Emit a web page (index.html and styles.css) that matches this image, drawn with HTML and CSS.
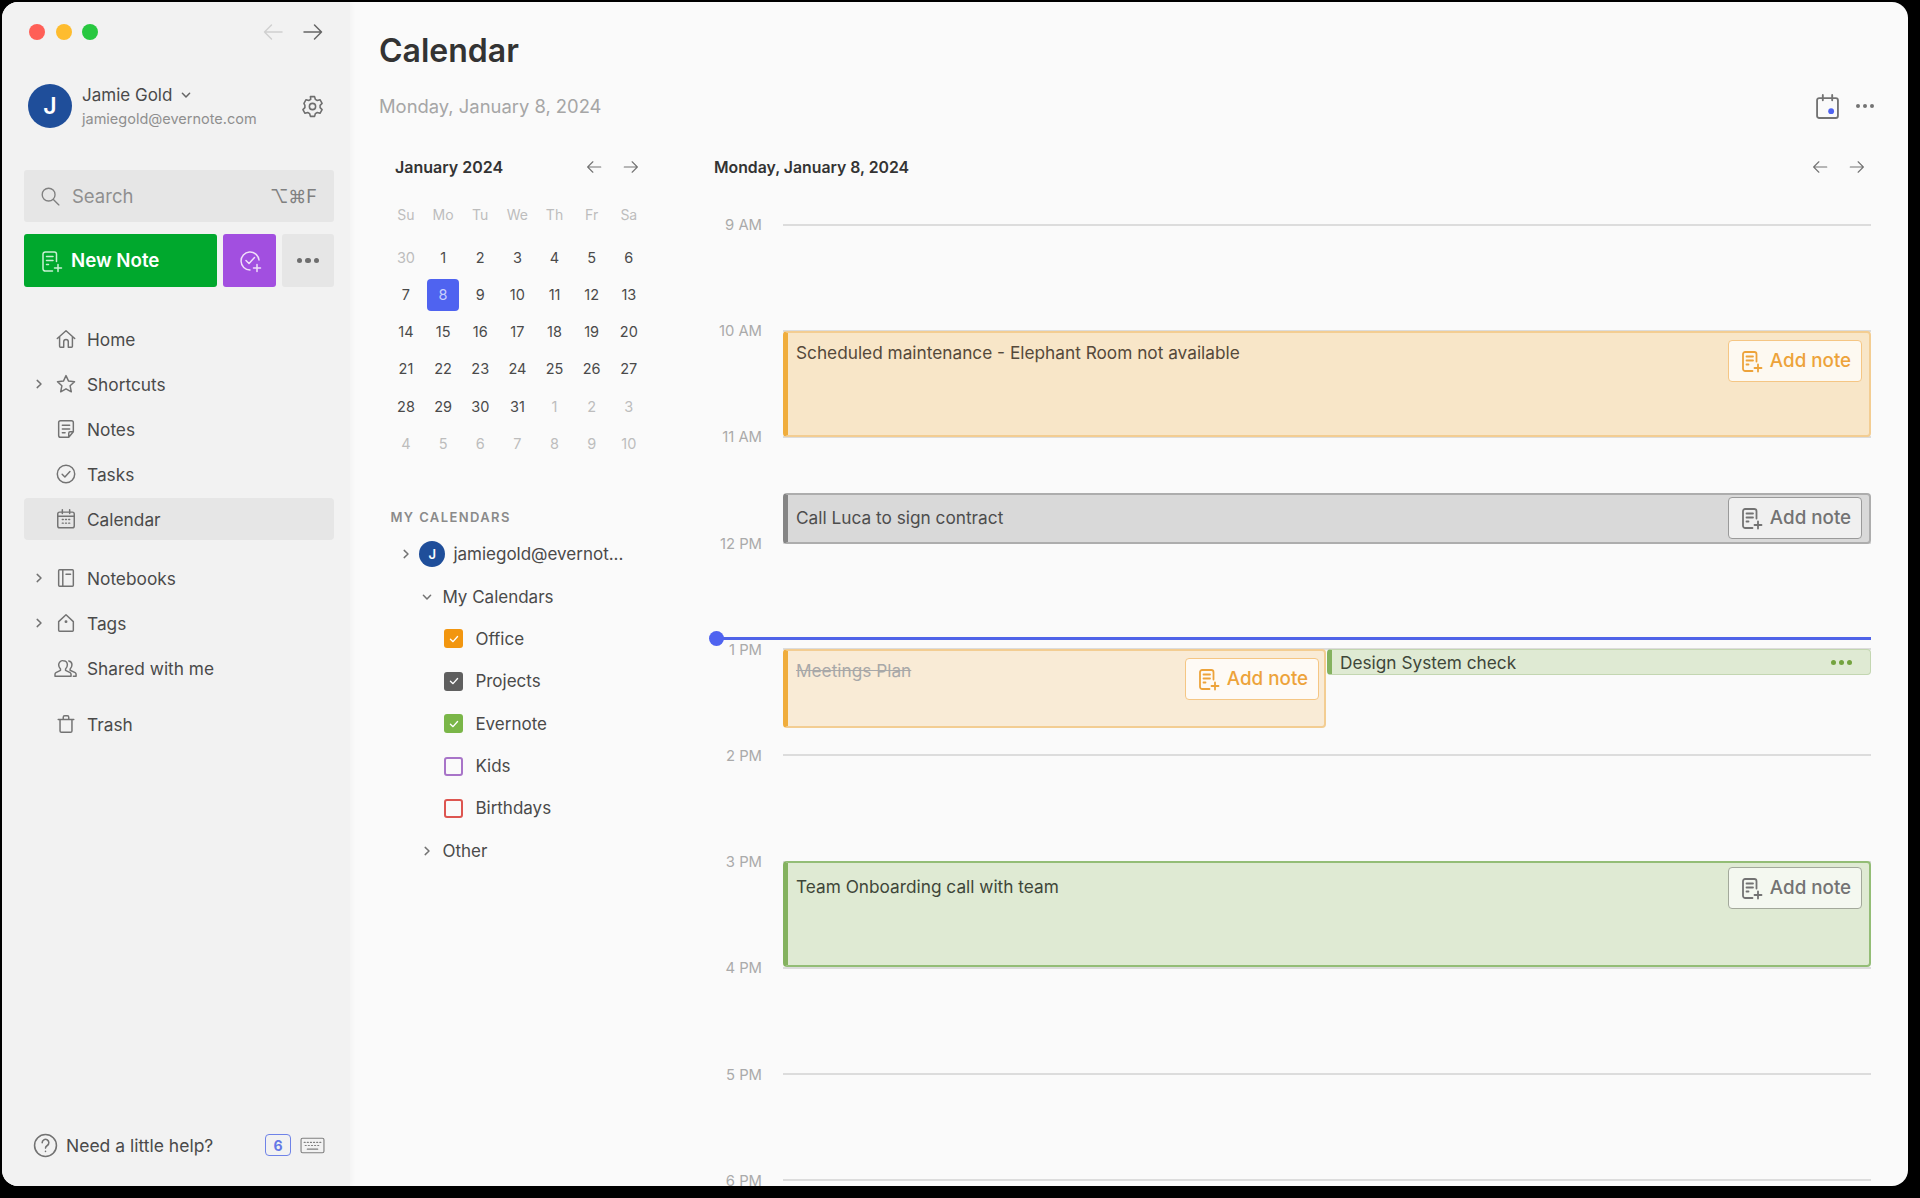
FILE: index.html
```html
<!DOCTYPE html>
<html lang="en">

<head>
    <meta charset="UTF-8">
    <title>Calendar</title>
    <link rel="stylesheet" href="styles.css">
</head>

<body>
    <svg class="sprites" width="0" height="0">
        <symbol id="arrow-left" viewBox="0 0 24 24"><path d="M21 12H3.5M10.5 5l-7 7 7 7"/></symbol>
        <symbol id="arrow-right" viewBox="0 0 24 24"><path d="M3 12h17.5M13.5 5l7 7-7 7"/></symbol>
        <symbol id="chev-right" viewBox="0 0 12 12"><path d="M4.2 2.4 8 6 4.2 9.6"/></symbol>
        <symbol id="chev-down" viewBox="0 0 12 12"><path d="M2.4 4.2 6 8l3.6-3.8"/></symbol>
        <symbol id="note-plus" viewBox="0 0 24 24"><path d="M17.5 12.5V5.2a2.2 2.2 0 0 0-2.2-2.2H6.2A2.2 2.2 0 0 0 4 5.2v14.6A2.2 2.2 0 0 0 6.2 22h7.3M7.5 7.5h6.500M7.5 11.5h6.500M7.5 15.5h2M19 15.5v7M15.5 19h7"/></symbol>
        <symbol id="check" viewBox="0 0 18 18"><path d="M5 9.300 7.900 12 13 6.200"/></symbol>
    </svg>

    <div class="window">
        <aside class="sidebar">
            <div class="topbar">
                <div class="lights">
                    <span class="light light-red"></span>
                    <span class="light light-yellow"></span>
                    <span class="light light-green"></span>
                </div>
                <div class="history">
                    <svg class="icon icon-faint"><use href="#arrow-left"/></svg>
                    <svg class="icon"><use href="#arrow-right"/></svg>
                </div>
            </div>

            <div class="account">
                <div class="avatar">J</div>
                <div class="account-text">
                    <div class="account-name">Jamie Gold
                        <svg class="chev"><use href="#chev-down"/></svg>
                    </div>
                    <div class="account-mail">jamiegold@evernote.com</div>
                </div>
                <svg class="gear" viewBox="0 0 24 24">
                    <path d="M10 2.5h4l.7 2.6 1.900 1.100 2.600-.7 2 3.500-1.900 1.900v2.200l1.900 1.900-2 3.500-2.600-.7-1.900 1.100-.7 2.600h-4l-.7-2.600-1.900-1.100-2.600.7-2-3.500 1.900-1.900v-2.200L3.800 9l2-3.500 2.600.7 1.900-1.100z"/>
                    <circle cx="12" cy="12" r="3"/>
                </svg>
            </div>

            <div class="search">
                <svg class="search-icon" viewBox="0 0 24 24"><circle cx="10.5" cy="10.5" r="7"/><path d="m15.7 15.7 6 6"/></svg>
                <span class="search-label">Search</span>
                <span class="search-keys">⌥⌘F</span>
            </div>

            <div class="actions">
                <div class="btn-note">
                    <svg class="btn-icon"><use href="#note-plus"/></svg>
                    New Note
                </div>
                <div class="btn-task">
                    <svg class="btn-icon" viewBox="0 0 24 24"><path d="M21 11a9 9 0 1 0-9 10M8 11.5l3 3 5.500-6M19 15.500v7M15.500 19h7"/></svg>
                </div>
                <div class="btn-more"><span></span><span></span><span></span></div>
            </div>

            <nav class="nav">
                <div class="nav-item">
                    <span class="nav-chev"></span>
                    <svg class="nav-icon" viewBox="0 0 24 24"><path d="M2.500 11.500 12 3l9.500 8.500M5 9.500V20a1 1 0 0 0 1 1h3.500v-6a2.500 2.500 0 0 1 5 0v6H18a1 1 0 0 0 1-1V9.500"/></svg>
                    Home
                </div>
                <div class="nav-item">
                    <svg class="nav-chev"><use href="#chev-right"/></svg>
                    <svg class="nav-icon" viewBox="0 0 24 24"><path d="m12 2.800 2.800 6 6.500.8-4.800 4.400 1.300 6.500L12 17.300l-5.800 3.200 1.300-6.500-4.800-4.400 6.500-.8z"/></svg>
                    Shortcuts
                </div>
                <div class="nav-item">
                    <span class="nav-chev"></span>
                    <svg class="nav-icon" viewBox="0 0 24 24"><path d="M20 15V5a2 2 0 0 0-2-2H6a2 2 0 0 0-2 2v14a2 2 0 0 0 2 2h9zM20 15h-3.500a1.500 1.500 0 0 0-1.500 1.500V21M8 8h8M8 12h8M8 16h3"/></svg>
                    Notes
                </div>
                <div class="nav-item">
                    <span class="nav-chev"></span>
                    <svg class="nav-icon" viewBox="0 0 24 24"><circle cx="12" cy="12" r="9.500"/><path d="m7.800 12.200 3 3 5.500-6"/></svg>
                    Tasks
                </div>
                <div class="nav-item nav-item-active">
                    <span class="nav-chev"></span>
                    <svg class="nav-icon" viewBox="0 0 24 24"><rect x="3" y="4.500" width="18" height="17" rx="2"/><path d="M8 2v4M16 2v4M3 9h18M8 12.500h1M11.500 12.500h1M15 12.500h1M8 16.500h1M11.500 16.500h1M15 16.500h1"/></svg>
                    Calendar
                </div>
                <div class="nav-item nav-group">
                    <svg class="nav-chev"><use href="#chev-right"/></svg>
                    <svg class="nav-icon" viewBox="0 0 24 24"><rect x="4" y="3" width="16" height="18" rx="1"/><path d="M8.500 3v18M12 8h5"/></svg>
                    Notebooks
                </div>
                <div class="nav-item">
                    <svg class="nav-chev"><use href="#chev-right"/></svg>
                    <svg class="nav-icon" viewBox="0 0 24 24"><path d="M4 10.500 12 3l8 7.500V20a1 1 0 0 1-1 1H5a1 1 0 0 1-1-1z"/><circle cx="12" cy="10.500" r=".8"/></svg>
                    Tags
                </div>
                <div class="nav-item">
                    <span class="nav-chev"></span>
                    <svg class="nav-icon nav-icon-wide" viewBox="0 0 28 24"><path d="M11 4a4.500 4.500 0 0 1 4.500 4.500c0 2-1 3.500-2 4.500v1.500l5 2.500c.8.400 1 1 1 1.800V21H2v-2.200c0-.8.300-1.400 1-1.800l5-2.500V13c-1-1-2-2.500-2-4.500A4.500 4.500 0 0 1 11 4zM17 4.300a4.300 4.300 0 0 1 3.500 4.200c0 2-1 3.500-2 4.500v1.500l5.500 2.500c.8.400 1 1 1 1.800V21h-3"/></svg>
                    Shared with me
                </div>
                <div class="nav-item nav-trash">
                    <span class="nav-chev"></span>
                    <svg class="nav-icon" viewBox="0 0 24 24"><path d="M3.500 7h17M9 7V4.500A1.500 1.500 0 0 1 10.500 3h3A1.500 1.500 0 0 1 15 4.500V7M5.500 7v12.500A1.500 1.500 0 0 0 7 21h10a1.500 1.500 0 0 0 1.500-1.500V7"/></svg>
                    Trash
                </div>
            </nav>

            <div class="help">
                <svg class="help-icon" viewBox="0 0 24 24"><circle cx="12" cy="12" r="10.500"/><path d="M8.800 9.300a3.200 3.200 0 1 1 4.900 2.700c-1 .7-1.700 1.300-1.700 2.500M12 17.500v.3"/></svg>
                <span class="help-text">Need a little help?</span>
                <span class="help-badge">6</span>
                <svg class="help-keys" viewBox="0 0 24 18"><rect x="1" y="2" width="22" height="14" rx="1.500"/><path d="M4 6h1M7 6h1M10 6h1M13 6h1M16 6h1M19 6h1M5 9h1M8 9h1M11 9h1M14 9h1M17 9h1M7 12.500h10"/></svg>
            </div>
        </aside>

        <main class="main">
            <h1 class="page-title">Calendar</h1>
            <div class="page-sub">
                <span class="page-date">Monday, January 8, 2024</span>
                <div class="page-tools">
                    <svg class="tool-cal" viewBox="0 0 24 24"><rect x="2" y="4" width="20" height="19" rx="2"/><path d="M7.500 1v5M16.500 1v5"/><circle class="tool-dot" cx="15.500" cy="16.500" r="2.800"/></svg>
                    <div class="tool-more"><span></span><span></span><span></span></div>
                </div>
            </div>

            <div class="panels">
                <section class="mini">
                    <div class="mini-head">
                        <span class="mini-title">January 2024</span>
                        <div class="mini-arrows">
                            <svg class="icon-sm"><use href="#arrow-left"/></svg>
                            <svg class="icon-sm"><use href="#arrow-right"/></svg>
                        </div>
                    </div>
                    <div class="weekdays">
                        <span>Su</span><span>Mo</span><span>Tu</span><span>We</span><span>Th</span><span>Fr</span><span>Sa</span>
                    </div>
                    <div class="days">
                        <span class="off">30</span><span>1</span><span>2</span><span>3</span><span>4</span><span>5</span><span>6</span>
                        <span>7</span><span><b class="today">8</b></span><span>9</span><span>10</span><span>11</span><span>12</span><span>13</span>
                        <span>14</span><span>15</span><span>16</span><span>17</span><span>18</span><span>19</span><span>20</span>
                        <span>21</span><span>22</span><span>23</span><span>24</span><span>25</span><span>26</span><span>27</span>
                        <span>28</span><span>29</span><span>30</span><span>31</span><span class="off">1</span><span class="off">2</span><span class="off">3</span>
                        <span class="off">4</span><span class="off">5</span><span class="off">6</span><span class="off">7</span><span class="off">8</span><span class="off">9</span><span class="off">10</span>
                    </div>

                    <div class="cal-heading">MY CALENDARS</div>
                    <div class="tree">
                        <div class="tree-row tree-account">
                            <svg class="tree-chev"><use href="#chev-right"/></svg>
                            <span class="tree-avatar">J</span>
                            jamiegold@evernot...
                        </div>
                        <div class="tree-row tree-group">
                            <svg class="tree-chev"><use href="#chev-down"/></svg>
                            My Calendars
                        </div>
                        <div class="tree-row tree-leaf">
                            <span class="box box-orange"><svg><use href="#check"/></svg></span>
                            Office
                        </div>
                        <div class="tree-row tree-leaf">
                            <span class="box box-gray"><svg><use href="#check"/></svg></span>
                            Projects
                        </div>
                        <div class="tree-row tree-leaf">
                            <span class="box box-green"><svg><use href="#check"/></svg></span>
                            Evernote
                        </div>
                        <div class="tree-row tree-leaf">
                            <span class="box box-purple"></span>
                            Kids
                        </div>
                        <div class="tree-row tree-leaf">
                            <span class="box box-red"></span>
                            Birthdays
                        </div>
                        <div class="tree-row tree-group">
                            <svg class="tree-chev"><use href="#chev-right"/></svg>
                            Other
                        </div>
                    </div>
                </section>

                <section class="day">
                    <div class="day-head">
                        <span class="day-title">Monday, January 8, 2024</span>
                        <div class="day-arrows">
                            <svg class="icon-sm"><use href="#arrow-left"/></svg>
                            <svg class="icon-sm"><use href="#arrow-right"/></svg>
                        </div>
                    </div>

                    <div class="timeline">
                        <div class="hour"><span>9 AM</span><i></i></div>
                        <div class="hour"><span>10 AM</span><i></i></div>
                        <div class="hour"><span>11 AM</span><i></i></div>
                        <div class="hour"><span>12 PM</span><i></i></div>
                        <div class="hour"><span>1 PM</span><i></i></div>
                        <div class="hour"><span>2 PM</span><i></i></div>
                        <div class="hour"><span>3 PM</span><i></i></div>
                        <div class="hour"><span>4 PM</span><i></i></div>
                        <div class="hour"><span>5 PM</span><i></i></div>
                        <div class="hour"><span>6 PM</span><i></i></div>

                        <div class="event event-orange ev-maintenance">
                            <span>Scheduled maintenance - Elephant Room not available</span>
                            <div class="add-note"><svg><use href="#note-plus"/></svg>Add note</div>
                        </div>
                        <div class="event event-gray ev-luca">
                            <span>Call Luca to sign contract</span>
                            <div class="add-note"><svg><use href="#note-plus"/></svg>Add note</div>
                        </div>
                        <div class="event event-orange event-past ev-meetings">
                            <span class="struck">Meetings Plan</span>
                            <div class="add-note"><svg><use href="#note-plus"/></svg>Add note</div>
                        </div>
                        <div class="event event-green ev-design">
                            <span>Design System check</span>
                            <div class="ev-dots"><b></b><b></b><b></b></div>
                        </div>
                        <div class="event event-green ev-team">
                            <span>Team Onboarding call with team</span>
                            <div class="add-note"><svg><use href="#note-plus"/></svg>Add note</div>
                        </div>

                        <div class="now"></div>
                    </div>
                </section>
            </div>
        </main>
    </div>
</body>

</html>
```

FILE: styles.css
```css
* {
    box-sizing: border-box;
}

html,
body {
    height: 100%;
}

body {
    margin: 0;
    padding: 2px 0 0 2px;
    background-color: #000;
    font-family: Inter, "DejaVu Sans", sans-serif;
    color: #4a4a4a;
    overflow: hidden;
}

.sprites {
    position: absolute;
}

svg {
    fill: none;
    stroke: currentColor;
    stroke-linecap: round;
    stroke-linejoin: round;
    stroke-width: 1.5;
    flex: none;
}

.window {
    display: flex;
    width: 1906px;
    height: 1184px;
    border-radius: 16px;
    overflow: hidden;
    background-color: #fafafa;
}

/* sidebar */

.sidebar {
    display: flex;
    flex-direction: column;
    width: 348px;
    padding: 0 16px 0 22px;
    background-color: #f2f2f2;
    box-shadow: 1px 0 6px rgba(0, 0, 0, 0.04);
}

.topbar {
    display: flex;
    align-items: center;
    justify-content: space-between;
    height: 60px;
    padding: 0 9px 0 5px;
}

.lights {
    display: flex;
    gap: 10.5px;
}

.light {
    width: 16px;
    height: 16px;
    border-radius: 50%;
}

.light-red {
    background-color: #ff5f57;
}

.light-yellow {
    background-color: #febc2e;
}

.light-green {
    background-color: #28c840;
}

.history {
    display: flex;
    gap: 16px;
    color: #666;
}

.icon {
    width: 24px;
    height: 24px;
}

.icon-faint {
    color: #d0d0d0;
}

.account {
    display: flex;
    align-items: center;
    height: 44px;
    margin-top: 22px;
    padding-left: 4px;
}

.avatar {
    display: flex;
    align-items: center;
    justify-content: center;
    width: 44px;
    height: 44px;
    border-radius: 50%;
    background-color: #1f4e9a;
    color: #fff;
    font-size: 23px;
    font-weight: 600;
}

.account-text {
    flex: 1;
    margin-left: 10px;
}

.account-name {
    display: flex;
    align-items: center;
    gap: 8px;
    font-size: 17px;
    line-height: 22px;
    color: #4a4a4a;
}

.chev {
    width: 12px;
    height: 12px;
    color: #666;
}

.account-mail {
    margin-top: 4px;
    font-size: 14.5px;
    line-height: 18px;
    color: #8f8f8f;
}

.gear {
    width: 25px;
    height: 25px;
    margin-right: 9px;
    color: #6e6e6e;
}

.search {
    display: flex;
    align-items: center;
    height: 52px;
    margin-top: 42px;
    padding: 0 17px 0 15px;
    border-radius: 3px;
    background-color: #e6e6e6;
}

.search-icon {
    width: 22px;
    height: 22px;
    color: #808080;
}

.search-label {
    flex: 1;
    margin-left: 11px;
    font-size: 18.5px;
    color: #8f8f8f;
}

.search-keys {
    font-size: 18px;
    color: #808080;
}

.actions {
    display: flex;
    height: 53px;
    margin-top: 12px;
    gap: 6px;
}

.btn-note {
    display: flex;
    align-items: center;
    width: 193px;
    padding-left: 15px;
    border-radius: 3px;
    background-color: #00a82d;
    color: #fff;
    font-size: 18.7px;
    font-weight: 600;
}

.btn-icon {
    width: 24px;
    height: 24px;
    margin-right: 8px;
    color: #c9f0d3;
}

.btn-task {
    display: flex;
    align-items: center;
    justify-content: center;
    width: 53px;
    border-radius: 3px;
    background-color: #a24fe0;
}

.btn-task .btn-icon {
    margin: 0;
    color: #f0def9;
}

.btn-more {
    display: flex;
    align-items: center;
    justify-content: center;
    gap: 3px;
    width: 52px;
    border-radius: 3px;
    background-color: #e6e6e6;
}

.btn-more span {
    width: 5.5px;
    height: 5.5px;
    border-radius: 50%;
    background-color: #6e6e6e;
}

.nav {
    display: flex;
    flex-direction: column;
    gap: 3px;
    margin-top: 31px;
}

.nav-item {
    display: flex;
    align-items: center;
    height: 42px;
    padding-left: 9px;
    border-radius: 4px;
    font-size: 17.3px;
    color: #4a4a4a;
}

.nav-item-active {
    background-color: #e6e6e6;
}

.nav-group {
    margin-top: 14px;
}

.nav-trash {
    margin-top: 11px;
}

.nav-chev {
    width: 12px;
    height: 12px;
    color: #737373;
}

.nav-icon {
    width: 22px;
    height: 22px;
    margin: 0 10px 0 10px;
    color: #737373;
    stroke-width: 1.6;
}

.nav-icon-wide {
    width: 26px;
    margin: 0 8px 0 8px;
}

.help {
    display: flex;
    align-items: center;
    height: 26px;
    margin-top: auto;
    margin-bottom: 28px;
    padding-left: 9px;
}

.help-icon {
    width: 25px;
    height: 25px;
    color: #737373;
}

.help-text {
    flex: 1;
    margin-left: 8px;
    font-size: 17.5px;
    color: #4a4a4a;
}

.help-badge {
    display: flex;
    align-items: center;
    justify-content: center;
    width: 26px;
    height: 22px;
    border: 1.5px solid #6f83e8;
    border-radius: 4px;
    color: #6478e6;
    font-size: 14px;
    font-weight: 700;
}

.help-keys {
    width: 25px;
    height: 19px;
    margin: 0 9px;
    color: #808080;
    stroke-width: 1.1;
}

/* main area */

.main {
    flex: 1;
    min-width: 0;
    padding-left: 29px;
    overflow: hidden;
}

.page-title {
    margin: 0;
    padding-top: 29px;
    font-size: 32px;
    font-weight: 600;
    line-height: 40px;
    color: #333;
}

.page-sub {
    display: flex;
    align-items: center;
    justify-content: space-between;
    height: 28px;
    margin-top: 21px;
    padding-right: 34px;
}

.page-date {
    font-size: 18.4px;
    color: #a6a6a6;
}

.page-tools {
    display: flex;
    align-items: center;
    gap: 16px;
}

.tool-cal {
    width: 25px;
    height: 27px;
    color: #737373;
    stroke-width: 1.8;
}

.tool-dot {
    fill: #4f63f0;
    stroke: none;
}

.tool-more {
    display: flex;
    gap: 3px;
}

.tool-more span {
    width: 4px;
    height: 4px;
    border-radius: 50%;
    background-color: #737373;
}

.panels {
    display: flex;
    margin-top: 35px;
}

.mini {
    width: 260px;
    margin-left: 8.4px;
}

.mini-head {
    display: flex;
    align-items: center;
    justify-content: space-between;
    height: 24px;
    padding-left: 7.6px;
    padding-right: 7px;
}

.mini-title {
    font-size: 16px;
    font-weight: 600;
    color: #333;
}

.day-title {
    font-size: 15.8px;
    font-weight: 600;
    color: #333;
}

.mini-arrows {
    display: flex;
    gap: 19px;
    color: #737373;
}

.icon-sm {
    width: 18px;
    height: 18px;
}

.weekdays,
.days {
    display: grid;
    grid-template-columns: repeat(7, 1fr);
    text-align: center;
}

.weekdays {
    height: 24px;
    margin-top: 24px;
    font-size: 14px;
    line-height: 24px;
    color: #bdbdbd;
}

.days {
    grid-auto-rows: 37.2px;
    margin-top: 11.8px;
    font-size: 14.5px;
    color: #4a4a4a;
}

.days span {
    display: flex;
    align-items: center;
    justify-content: center;
}

.days .off {
    color: #bdbdbd;
}

.today {
    display: flex;
    align-items: center;
    justify-content: center;
    width: 32px;
    height: 32px;
    border-radius: 4px;
    background-color: #4f63f0;
    color: #c9d0fb;
    font-weight: 400;
}

.cal-heading {
    height: 16px;
    margin: 47px 0 0 3px;
    font-size: 13px;
    font-weight: 600;
    line-height: 16px;
    letter-spacing: 1.4px;
    color: #8a8a8a;
    white-space: nowrap;
}

.tree {
    margin-top: 8px;
}

.tree-row {
    display: flex;
    align-items: center;
    height: 42.4px;
    font-size: 17px;
    color: #4a4a4a;
    white-space: nowrap;
}

.tree-chev {
    width: 12px;
    height: 12px;
    color: #737373;
}

.tree-account {
    padding-left: 13px;
}

.tree-avatar {
    display: flex;
    align-items: center;
    justify-content: center;
    width: 26px;
    height: 26px;
    margin: 0 8px 0 7px;
    border-radius: 50%;
    background-color: #1f4e9a;
    color: #fff;
    font-size: 13px;
    font-weight: 600;
}

.tree-group {
    padding-left: 34px;
}

.tree-group .tree-chev {
    margin-right: 9px;
}

.tree-leaf {
    padding-left: 57px;
}

.box {
    display: flex;
    align-items: center;
    justify-content: center;
    width: 19px;
    height: 19px;
    margin-right: 12px;
    border: 2px solid transparent;
    border-radius: 3px;
}

.box svg {
    width: 16px;
    height: 16px;
    color: #fff;
}

.box-orange {
    background-color: #f2960f;
}

.box-gray {
    background-color: #5f5f5f;
}

.box-green {
    background-color: #7ab648;
}

.box-purple {
    border-color: #a874c8;
}

.box-red {
    border-color: #dd5550;
}

/* day view */

.day {
    flex: 1;
    min-width: 0;
    margin-left: 66.6px;
    margin-right: 37px;
}

.day-head {
    display: flex;
    align-items: center;
    justify-content: space-between;
    height: 24px;
    margin-right: 5px;
}

.day-arrows {
    display: flex;
    gap: 19px;
    color: #737373;
}

.timeline {
    position: relative;
    margin-top: 35px;
}

.hour {
    display: flex;
    height: 106.2px;
}

.hour span {
    width: 48px;
    height: 20px;
    margin-top: 1px;
    font-size: 14.8px;
    line-height: 20px;
    text-align: right;
    color: #aaa;
    white-space: nowrap;
}

.hour i {
    flex: 1;
    height: 2px;
    margin: 9.5px 0 0 21px;
    background-color: #dcdcdc;
}

.event {
    position: absolute;
    display: flex;
    justify-content: space-between;
    padding: 9px 7px 0 8px;
    border: 2px solid;
    border-left-width: 5px;
    border-radius: 4px;
    font-size: 17.25px;
    line-height: 22px;
    color: #4d4d4d;
}

.event-orange {
    background-color: #f8e6c8;
    border-color: #f3cd92;
    border-left-color: #f0ad3c;
    color: #55493a;
}

.event-gray {
    background-color: #d9d9d9;
    border-color: #adadad;
    border-left-color: #858585;
}

.event-green {
    background-color: #dfead3;
    border-color: #93bd76;
    border-left-color: #84b25f;
    color: #3e4639;
}

.event-past {
    background-color: #f9ebd6;
}

.ev-maintenance {
    top: 117px;
    left: 69px;
    right: 0;
    height: 106px;
}

.ev-luca {
    top: 279px;
    left: 69px;
    right: 0;
    height: 51px;
    align-items: center;
    padding-top: 0;
    padding-bottom: 2px;
}

.ev-meetings {
    top: 435px;
    left: 69px;
    width: 543px;
    height: 79px;
    padding-top: 9px;
    padding-right: 5px;
}

.ev-design {
    top: 435px;
    left: 613px;
    right: 0;
    height: 26px;
    align-items: center;
    padding: 1px 18px 0 8px;
    border-width: 1px;
    border-color: #c3d6b1;
    border-left-width: 5px;
    border-left-color: #84b25f;
}

.ev-team {
    top: 647px;
    left: 69px;
    right: 0;
    height: 106px;
    padding-top: 13px;
}

.struck {
    color: #a8a8a8;
    text-decoration: line-through;
}

.ev-dots {
    display: flex;
    gap: 2.5px;
}

.ev-dots b {
    width: 5.5px;
    height: 5.5px;
    border-radius: 50%;
    background-color: #74a33f;
}

.add-note {
    display: flex;
    align-items: center;
    justify-content: center;
    gap: 7px;
    flex: none;
    width: 134px;
    height: 42px;
    margin-top: -2px;
    border: 1.5px solid #a3a99b;
    border-radius: 4px;
    background-color: rgba(255, 255, 255, 0.65);
    color: #737373;
    font-size: 18.8px;
    font-weight: 500;
}

.add-note svg {
    width: 24px;
    height: 24px;
    stroke-width: 1.8;
}

.event-orange .add-note {
    border-color: #f5c684;
    background-color: rgba(255, 255, 255, 0.75);
    color: #eda33a;
}

.event-gray .add-note {
    margin-top: 0;
    border-color: #9a9a9a;
    background-color: #f0f0f0;
}

.ev-meetings .add-note {
    margin-top: -2px;
}

.ev-team .add-note {
    margin-top: -9px;
}

.now {
    position: absolute;
    top: 423px;
    left: 2px;
    right: 0;
    height: 3px;
    background-color: #4f63e8;
}

.now::before {
    content: "";
    position: absolute;
    top: -6px;
    left: -7px;
    width: 15px;
    height: 15px;
    border-radius: 50%;
    background-color: #4f63f0;
}
```
